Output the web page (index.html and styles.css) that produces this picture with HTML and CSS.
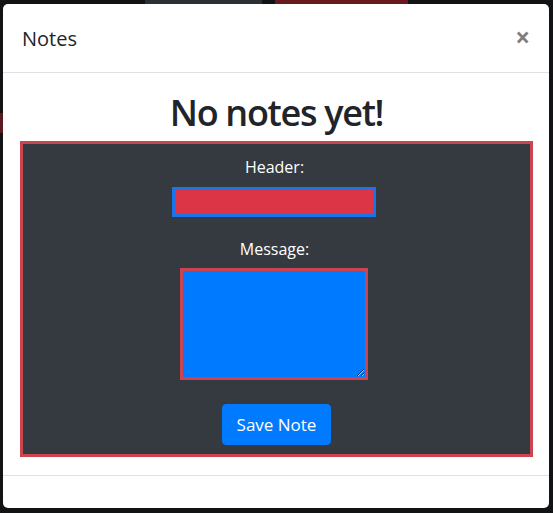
FILE: index.html
```html
<!DOCTYPE html>
<html lang="en">
<head>
<meta charset="utf-8">
<title>Notes</title>
<link rel="stylesheet" href="styles.css">
</head>
<body>
<div class="backdrop-page">
  <div class="bg-patch bg-gray"></div>
  <div class="bg-patch bg-red"></div>
  <div class="bg-patch bg-left"></div>
</div>
<div class="modal">
  <div class="modal-header">
    <h5 class="modal-title">Notes</h5>
    <button class="close" type="button" aria-label="Close">&times;</button>
  </div>
  <div class="modal-body">
    <h1 class="empty-title">No notes yet!</h1>
    <form class="note-form">
      <label class="field-label" for="header">Header:</label>
      <input class="header-input" id="header" type="text">
      <label class="field-label" for="message">Message:</label>
      <textarea class="message-input" id="message"></textarea>
      <button class="btn-save" type="button">Save Note</button>
    </form>
  </div>
  <div class="modal-footer"></div>
</div>
</body>
</html>
```
FILE: styles.css
```css
* { box-sizing: border-box; }
html, body { margin: 0; height: 100%; }
body {
  background: #121314;
  font-family: "Open Sans", "Noto Sans", sans-serif;
  color: #212529;
  padding: 4px 4px 5px 3px;
  position: relative;
  overflow: hidden;
}
.backdrop-page { position: absolute; inset: 0; }
.bg-patch { position: absolute; }
.bg-gray { left: 145px; top: 0; width: 117px; height: 6px; background: #2b3034; }
.bg-red { left: 275px; top: 0; width: 133px; height: 6px; background: #6a1820; }
.bg-left { left: 0; top: 113px; width: 4px; height: 20px; background: #5a1a20; }
.modal {
  position: relative;
  background: #fff;
  border-radius: 5px;
  height: 504px;
  display: flex;
  flex-direction: column;
  overflow: hidden;
}
.modal-header {
  flex: 0 0 69px;
  display: flex;
  align-items: center;
  justify-content: space-between;
  padding: 1px 19px 0 19px;
  border-bottom: 1px solid #dee2e6;
}
.modal-title {
  margin: 0;
  font-size: 20px;
  font-weight: 500;
  line-height: 1.5;
}
.close {
  background: none;
  border: 0;
  padding: 0;
  margin-top: -3px;
  font-size: 26px;
  font-weight: 700;
  line-height: 1;
  color: #000;
  opacity: .5;
  font-family: "Open Sans", sans-serif;
}
.modal-body {
  flex: 0 0 402px;
  padding: 16px 16px 18px 17px;
}
.empty-title {
  margin: 0 0 4px;
  text-align: center;
  font-size: 36px;
  font-weight: 600;
  letter-spacing: -1.3px;
  line-height: 48px;
}
.note-form {
  background: #343a40;
  border: 3px solid #cc4450;
  height: 316px;
  display: flex;
  flex-direction: column;
  align-items: center;
  padding: 11px 0 9px;
  color: #fff;
}
.field-label {
  font-size: 16px;
  line-height: 24px;
  margin-right: 4px;
}
.header-input {
  width: 204px;
  height: 30px;
  flex: none;
  background: #dc3545;
  border: 3px solid #1a73e8;
  margin: 8px 6px 20px 0;
}
.message-input {
  width: 188px;
  height: 112px;
  flex: none;
  background: #007bff;
  border: 3px solid #cc4450;
  margin: 7px 6px 24px 0;
  display: block;
  resize: both;
}
.btn-save {
  flex: none;
  background: #007bff;
  color: #fff;
  border: 1px solid #007bff;
  border-radius: 4px;
  font-family: "Open Sans", sans-serif;
  font-size: 17px;
  line-height: 27px;
  padding: 6px 12px;
  width: 109px;
}
.modal-footer {
  flex: 0 0 33px;
  border-top: 1px solid #dee2e6;
}
```
